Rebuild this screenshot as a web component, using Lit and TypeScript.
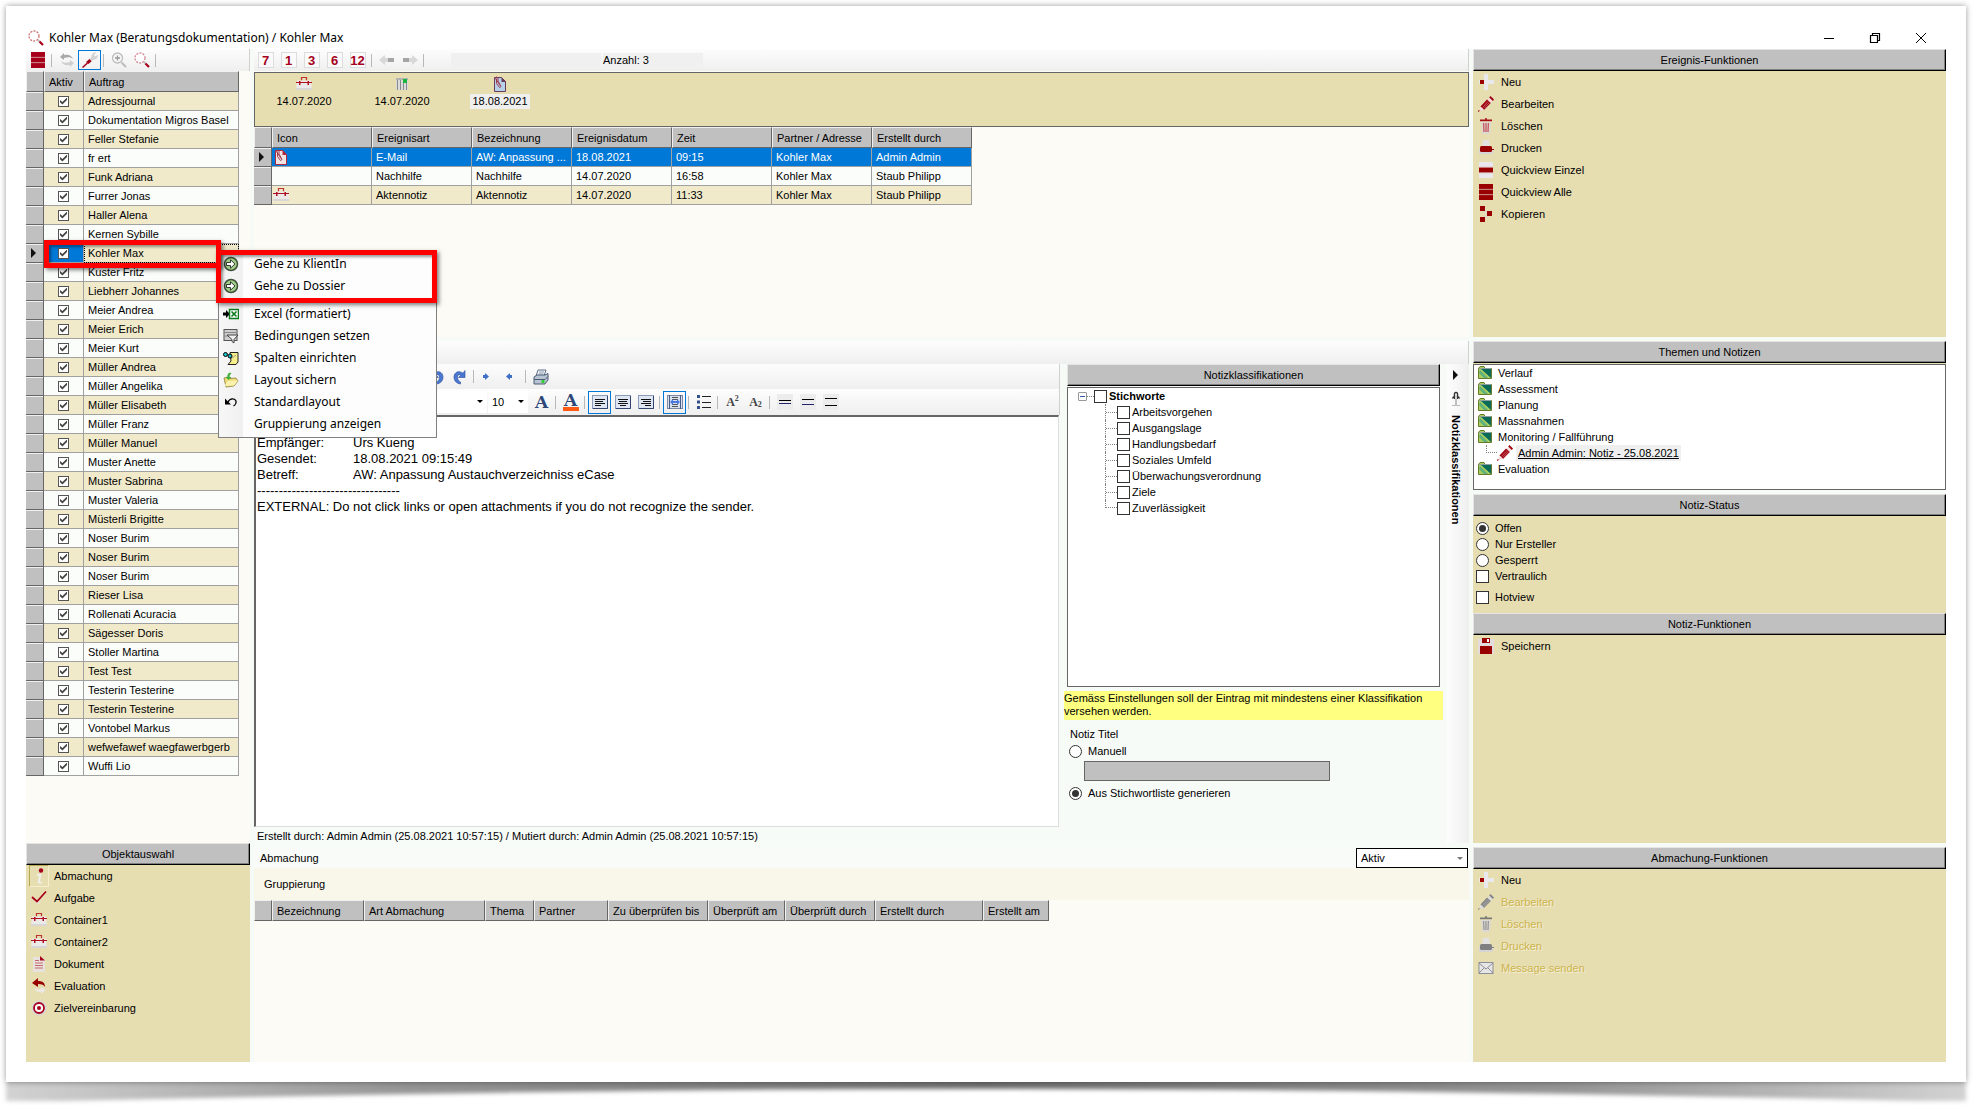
import { LitElement, html, svg, css, nothing } from "lit";
import { customElement, state } from "lit/decorators.js";
import { classMap } from "lit/directives/class-map.js";

const RED = "#a6001a";
const DARK_RED = "#990000";

const icon = (body: unknown, cls = "") =>
  html`<svg class="ic ${cls}" viewBox="0 0 16 16" width="16" height="16" aria-hidden="true">${body}</svg>`;

const pencil = (main: string, light: string) => svg`
  <path d="M9.500 4 12 1.500 15 4.500 12.500 7.500z" fill="${light}"/>
  <path d="M2.500 10.500 9 3.500 12.800 7 6 14z" fill="${main}"/>
  <path d="M11.200 1.500 12.500 0 16 3.500 14.800 5z" fill="${main}"/>
  <path d="M2.500 10.500 6 14 1.500 15z" fill="${light}"/>
  <path d="M0 14.500h2.500L0 16z" fill="${main}"/>
  <path d="M4.500 11.500 10 5.500M5.800 12.500 11.300 6.700" stroke="${light}" stroke-width=".4"/>`;

const trash = (main: string, light: string) => svg`
  <path d="M3 4h10l-1.300 12H4.300z" fill="#dcd8d4"/>
  <path d="M2 1.500h12v1.700H2z" fill="${main}"/><path d="M7 .2h2v1.600H7z" fill="${main}"/>
  <path d="M5.600 5 6 14M8 5v9M10.400 5 10 14" stroke="${light}" stroke-width="1.300"/>`;

const printer = (main: string) => svg`
  <path d="M5 0h6l1 6H4z" fill="#e4e2e0"/><path d="M1 8h14v5l-1 1H2l-1-1z" fill="#d6d4d4"/>
  <rect x="2" y="6" width="12" height="6" rx="1.500" fill="${main}"/>
  <path d="M13 9.500h3" stroke="${main}"/>`;

const briefcase = svg`
  <path d="M5.500 4.500v-3h5v3" fill="none" stroke="#b33" stroke-width="1.200"/>
  <path d="M1 4.500h14l1 9.500H0z" fill="#ece9e9"/><path d="M0 12h16v2H0z" fill="#d9d6d6"/>
  <path d="M0 6.500h16" stroke="#b01020" stroke-width="1"/>
  <path d="M3 5h1.500v4H3zM11.500 5H13v4h-1.500z" fill="#b01020"/>`;

const stack = (a: string, b: string) => svg`
  <rect x="1" y="0" width="14" height="16" fill="#e4e0dc"/>
  <rect x="1" y="0" width="14" height="5" fill="${a}"/>
  <rect x="1" y="5.500" width="14" height="5" fill="${b}"/>
  <rect x="1" y="11" width="14" height="5" fill="${a}"/>
  <path d="M1 5.300h14M1 10.700h14" stroke="#c98a8a" stroke-width=".7"/>`;

const lens = (ring: string, handle: string) => svg`
  <circle cx="6" cy="6" r="5" fill="#fff" stroke="${ring}" stroke-width="1.300" stroke-dasharray="2 1.200"/>
  <path d="M10 10l1.500 1.500" stroke="#bbb" stroke-width="2"/>
  <path d="M11.500 11.500l3.500 3.500" stroke="${handle}" stroke-width="2.200"/>`;

const clipDoc = (fill: string, line: string) => svg`
  <path d="M2.500 1.500h7l4 4v10h-11z" fill="${fill}" stroke="${line}"/>
  <path d="M9.500 1v5h4.500z" fill="${line}"/>
  <path d="M4.500 2.500v5l3 4 1.500-1L6 5V2L4.500.8 3.500 2.500l4.500 7" fill="none" stroke="#a03c50"/>`;

const align = (x1: number, x2: number, x3: number) => svg`
  <rect x=".5" y="1.500" width="15" height="13" fill="#dfe6f3" stroke="#8b9cba"/>
  <path d="M1 14.500h14.500V2" fill="none" stroke="#31456e"/>
  <path d="M3 5.500h10M${x1} 7.500h8M${x2} 9.500h10M${x3} 11.500h6" stroke="#111"/>`;

const spacing = (top: string, bottom: string, gap: number) => svg`
  <rect width="16" height="16" fill="#ececec"/>
  <path d="M2 ${8 - gap}h12" stroke="${top}"/><path d="M2 ${8 + gap}h12" stroke="${bottom}"/>`;

const go = svg`
  <circle cx="8" cy="8" r="6.500" fill="#9fce86" stroke="#3d4f3a" stroke-width="1.500"/>
  <path d="M3.500 6.500h4V3.800L12 8l-4.500 4.200V9.500h-4z" fill="#fff" stroke="#222" stroke-width=".9"/>`;

const curl = svg`
  <path d="M3 1.500v7h6.500L7.300 6.200C9 5 10.500 6 10.500 8c0 2.500-1 4-3 5v2C11.500 14.500 14 12 14 8c0-5-5-7-9-3.800z" fill="#4a78d0" stroke="#2c4f9c" stroke-width=".6"/>`;

const ICONS: Record<string, unknown> = {
  search: lens("#c77", RED),
  searchRed: lens("#d08a95", RED),
  zoomIn: svg`<circle cx="6.500" cy="6" r="5" fill="#f6f6f6" stroke="#bdbdbd" stroke-width="1.300"/>
    <path d="M4 6h5M6.500 3.500v5" stroke="#999" stroke-width="1.300"/><path d="M10.500 10.500l4.500 4.500" stroke="#bbb" stroke-width="2"/>`,
  db: stack(RED, RED),
  refresh: svg`<path d="M1 5l4-4v2c5-1 8 1 9 4-2-2-5-2-9-1v2z" fill="#a9a9a9"/>
    <path d="M15 11l-4 4v-2c-5 1-8-1-9-4 2 2 5 2 9 1V8z" fill="#cfcfcf"/>`,
  wrench: svg`<path d="M6 9l3.500-4C9 2 11.500 0 14.500.2L12 3l1 1.500 3-1.800c.3 3-2 5.300-4.800 5L8 11z" fill="#d5d2d2"/>
    <path d="M4 10 7.500 7l2 2.200L6.500 12z" fill="${RED}"/><path d="M.5 15.500l5-4.500" stroke="${RED}" stroke-width="1.500"/>`,
  left: svg`<path d="M0 8l6-5v3h4v4H6v3z" fill="#d8d8d8"/><rect x="9" y="6" width="6" height="4" fill="#a5a5a5"/>`,
  right: svg`<path d="M16 8l-6-5v3H6v4h4v3z" fill="#d8d8d8"/><rect x="1" y="6" width="6" height="4" fill="#a5a5a5"/>`,
  briefcase,
  calendar: svg`<rect x="2" y="2" width="12" height="12" fill="#fff"/><path d="M2 3h12" stroke="#666"/>
    <path d="M3.500 4v10M6.500 4v10M9.500 4v10M12.500 4v10" stroke="#8a8a8a" stroke-width="1.600"/><rect x="9" y="3" width="4" height="4" fill="#18b63a"/>`,
  clipBlue: clipDoc("#b5d0e8", "#6a3c5c"),
  clipRed: clipDoc("#f0e4e4", "#b02a3a"),
  plus: svg`<path d="M6 0h4v6h6v4h-6v6H6v-6H1V6h5z" fill="#e9e8ec"/><rect x="2" y="6" width="4" height="4" fill="${DARK_RED}"/>`,
  edit: pencil("#a00010", "#f4dede"),
  editOff: pencil("#858585", "#dcdcdc"),
  trash: trash("#a50c18", "#c8555a"),
  trashOff: trash("#777", "#999"),
  print: printer(DARK_RED),
  printOff: printer("#808080"),
  single: stack("#e9e8ec", DARK_RED),
  all: stack(DARK_RED, DARK_RED),
  copy: svg`<path d="M5 4l6 4-6 5" fill="none" stroke="#dcd8d0" stroke-width="2"/>
    <rect x="2" y="0" width="5" height="5" fill="${DARK_RED}"/><rect x="9" y="5" width="5" height="5" fill="${DARK_RED}"/><rect x="2" y="11" width="5" height="5" fill="${DARK_RED}"/>`,
  folder: svg`<path d="M1.500 13.500v-10l1.500-2h4l1 2h6.500v10z" fill="#a8cf60" stroke="#6b7a28"/>
    <path d="M4 4h10v9z" fill="#0b6a58"/><path d="M3 5l8 8H7L2 8z" fill="#5fb07a"/><path d="M1.500 3.500h13" stroke="#8aa0a0"/>`,
  save: svg`<path d="M0 1h16v15H0z" fill="#e4dcdc"/><rect x="4" y="0" width="8" height="5" fill="${DARK_RED}"/>
    <rect x="9" y="1" width="2" height="3" fill="#fff"/><rect x="2" y="8" width="12" height="8" fill="${DARK_RED}"/>`,
  info: svg`<circle cx="10" cy="2.500" r="2.200" fill="${RED}"/><path d="M6 6h4.500L9 14h2v1.500H6.500L8 8H6z" fill="#efeee8"/>`,
  check: svg`<path d="M3 10l4 4 4-3-4 1z" fill="#e8e8e8"/><path d="M1 7l5 4.500 9-10" fill="none" stroke="${RED}" stroke-width="1.700"/>`,
  doc: svg`<path d="M2 1h8l4 4v11H2z" fill="#e8e2df"/><path d="M9 0v4.500h5z" fill="${RED}"/>
    <path d="M4 4.500h4M4 7h8M4 9.500h8M4 12h8" stroke="#c8686c"/>`,
  evaluate: svg`<path d="M1 5l6-5v3c5 0 7 2 7 6-1-2-3-3-7-3v3z" fill="${DARK_RED}"/>
    <path d="M15 12l-5 4v-2c-4 0-6-1-7-4 2 1 4 1.500 7 1V9z" fill="#ebe8e4"/>`,
  target: svg`<circle cx="8" cy="8" r="7.500" fill="#d9d6d8"/><circle cx="8" cy="8" r="5" fill="#fff" stroke="${RED}" stroke-width="1.800"/><circle cx="8" cy="8" r="2" fill="${RED}"/>`,
  mail: svg`<rect x="1" y="2.500" width="14" height="11" fill="#e6e6e6" stroke="#8e8e96"/>
    <path d="M1 3l7 6 7-6M1 13l5-5M15 13l-5-5" fill="none" stroke="#8e8e96"/>`,
  go,
  excel: svg`<path d="M0 6.500h3V4l4 4-4 4V9.500H0z" fill="#000"/><rect x="6.500" y="3.500" width="9" height="9" fill="#fff" stroke="#0a7a1c" stroke-width="1.500"/>
    <path d="M8.500 5.500l5 5M13.500 5.500l-5 5" stroke="#0a7a1c" stroke-width="1.600"/>`,
  filter: svg`<rect x="1" y="1.500" width="13" height="11" fill="#cfcfcf" stroke="#555"/><path d="M1 4.500h13M1 8h13" stroke="#888"/>
    <path d="M4 7h11l-4 4.500V15l-2-1.500v-2z" fill="#f2f2f2" stroke="#444"/>`,
  columns: svg`<path d="M7 2.500h8V12l-2 2.500H5L8 11z" fill="#f7ef8c" stroke="#222"/>
    <circle cx="2.500" cy="4.500" r="2" fill="#19c2c9" stroke="#000"/><circle cx="7" cy="6" r="2" fill="#19c2c9" stroke="#000"/><path d="M8 9l5-4" stroke="#998" />`,
  layout: svg`<path d="M1 6l4-1 2 1.500 6-.5 2 3-4 5-8 1z" fill="#f0dc7a" stroke="#8a7d35" stroke-width=".8"/>
    <path d="M1.500 14l3-5 10.500-.5-4 5z" fill="#fbf2ae"/><path d="M7 .5C5 1 4 3 4.500 5H2.500l3 3 3-3H6.500c0-2 1-3 2-3.500z" fill="#3fae3a"/>`,
  revert: svg`<path d="M2 4.500v6h6z" fill="#000"/><path d="M5 8c2-4 7-4 8-1 .5 2-1 4-2.500 5" fill="none" stroke="#000" stroke-width="1.200"/>`,
  undo: curl,
  redo: svg`<g transform="matrix(-1 0 0 1 16 0)">${curl}</g>`,
  dotR: svg`<path d="M2 6h2V4l4 3.500L4 11V9H2z" fill="#3f6fc6"/>`,
  dotL: svg`<path d="M8 6H6V4L2 7.500 6 11V9h2z" fill="#3f6fc6"/>`,
  printBlue: svg`<path d="M5 1h8l-2 6H3z" fill="#f7f9fc" stroke="#5c6c84"/><path d="M6 3h5M5.500 5h5" stroke="#8696ae"/>
    <path d="M1 8l3-2h8l3-1.500V11l-3 4H1z" fill="#b9c4d2" stroke="#4c5c74"/><path d="M1 10.500h11l3-3" fill="none" stroke="#4c5c74"/><rect x="8.500" y="11" width="3" height="3" fill="#2fd32f"/>`,
  alignLeft: align(3, 3, 3),
  alignCenter: align(4, 3, 5),
  alignRight: align(5, 3, 7),
  justify: svg`<rect x=".5" y="1.500" width="15" height="13" fill="#d8e0ee" stroke="#7c8aa6"/><path d="M2.500 1v14M13.500 1v14" stroke="#4a5d88"/>
    <path d="M5 3.500h6M5 5.500h6M5 10.500h6M5 12.500h6" stroke="#555"/><path d="M3 8l3-3v2h4V5l3 3-3 3V9H6v2z" fill="#4a7ae0"/>`,
  bullets: svg`<path d="M1 1h3v3H1zM1 6.500h3v3H1zM1 12h3v3H1z" fill="#34508c"/><path d="M6 2.500h9M6 8.500h9M6 13.500h9" stroke="#222"/>`,
  space1: spacing("#000", "#23236c", 1.500),
  space2: spacing("#000", "#23236c", 2.500),
  space3: spacing("#000", "#000", 3.500),
  min: svg`<path d="M3 8.500h10" stroke="#000"/>`,
  restore: svg`<path d="M3.500 5.500h7v7h-7z" fill="none" stroke="#000" stroke-width="1.200"/><path d="M5.500 5V3.500h7v7H11" fill="none" stroke="#000" stroke-width="1.200"/>`,
  close: svg`<path d="M3 3l10 10M13 3L3 13" stroke="#000"/>`,
  tri: svg`<path d="M5 3l5 5-5 5z" fill="#111"/>`,
  pin: svg`<path d="M6.500 8V4.500Q6 1.500 8 1.500T9.500 4.500V8M4.500 7.500q1-2 2-2M11.500 7.500q-1-2-2-2" fill="none" stroke="#333" stroke-width="1.400"/><path d="M8 8v6" stroke="#888"/><path d="M4 14.500h8" stroke="#bbb"/>`,
};

const ic = (name: string, cls = "") => icon(ICONS[name], cls);

const ORDERS = [
  "Adressjournal", "Dokumentation Migros Basel", "Feller Stefanie", "fr ert", "Funk Adriana", "Furrer Jonas",
  "Haller Alena", "Kernen Sybille", "Kohler Max", "Kuster Fritz", "Liebherr Johannes", "Meier Andrea",
  "Meier Erich", "Meier Kurt", "Müller Andrea", "Müller Angelika", "Müller Elisabeth", "Müller Franz",
  "Müller Manuel", "Muster Anette", "Muster Sabrina", "Muster Valeria", "Müsterli Brigitte", "Noser Burim",
  "Noser Burim", "Noser Burim", "Rieser Lisa", "Rollenati Acuracia", "Sägesser Doris", "Stoller Martina",
  "Test Test", "Testerin Testerine", "Testerin Testerine", "Vontobel Markus", "wefwefawef waegfawerbgerb", "Wuffi Lio",
];

type Item = { icon: string; label: string; off?: boolean; boxed?: boolean };

const EVENT_ACTIONS: Item[] = [
  { icon: "plus", label: "Neu" },
  { icon: "edit", label: "Bearbeiten" },
  { icon: "trash", label: "Löschen" },
  { icon: "print", label: "Drucken" },
  { icon: "single", label: "Quickview Einzel" },
  { icon: "all", label: "Quickview Alle" },
  { icon: "copy", label: "Kopieren" },
];
const AGREEMENT_ACTIONS: Item[] = [
  { icon: "plus", label: "Neu" },
  { icon: "editOff", label: "Bearbeiten", off: true },
  { icon: "trashOff", label: "Löschen", off: true },
  { icon: "printOff", label: "Drucken", off: true },
  { icon: "mail", label: "Message senden", off: true },
];
const OBJECTS: Item[] = [
  { icon: "info", label: "Abmachung", boxed: true },
  { icon: "check", label: "Aufgabe" },
  { icon: "briefcase", label: "Container1" },
  { icon: "briefcase", label: "Container2" },
  { icon: "doc", label: "Dokument" },
  { icon: "evaluate", label: "Evaluation" },
  { icon: "target", label: "Zielvereinbarung" },
];
const MENU: Item[] = [
  { icon: "excel", label: "Excel (formatiert)" },
  { icon: "filter", label: "Bedingungen setzen" },
  { icon: "columns", label: "Spalten einrichten" },
  { icon: "layout", label: "Layout sichern" },
  { icon: "revert", label: "Standardlayout" },
  { icon: "", label: "Gruppierung anzeigen" },
];
const EVENT_HEAD = ["Icon", "Ereignisart", "Bezeichnung", "Ereignisdatum", "Zeit", "Partner / Adresse", "Erstellt durch"];
const EVENTS = [
  ["clipRed", "E-Mail", "AW: Anpassung ...", "18.08.2021", "09:15", "Kohler Max", "Admin Admin"],
  ["", "Nachhilfe", "Nachhilfe", "14.07.2020", "16:58", "Kohler Max", "Staub Philipp"],
  ["briefcase", "Aktennotiz", "Aktennotiz", "14.07.2020", "11:33", "Kohler Max", "Staub Philipp"],
];
const AGREEMENT_HEAD: [string, number][] = [
  ["Bezeichnung", 92], ["Art Abmachung", 121], ["Thema", 49], ["Partner", 74], ["Zu überprüfen bis", 100],
  ["Überprüft am", 77], ["Überprüft durch", 90], ["Erstellt durch", 108], ["Erstellt am", 66],
];
const KEYWORDS = ["Arbeitsvorgehen", "Ausgangslage", "Handlungsbedarf", "Soziales Umfeld", "Überwachungsverordnung", "Ziele", "Zuverlässigkeit"];
const DATES = [["briefcase", "14.07.2020"], ["calendar", "14.07.2020"], ["clipBlue", "18.08.2021"]];

@customElement("app-root")
export class AppRoot extends LitElement {
  @state() private order = 8;
  @state() private event = 0;

  static styles = css`
    :host { display: block; font: 11px/14px "Liberation Sans", Arial, sans-serif; color: #000; background: #fff; }
    *, *::before, *::after { box-sizing: border-box; }
    button, input, select { font: inherit; color: inherit; margin: 0; padding: 0; border: 0; background: none; border-radius: 0; }
    h1, h2, ul, p { margin: 0; padding: 0; font: inherit; list-style: none; }
    .ic { display: block; flex: none; }
    .page { display: flex; flex-direction: column; min-height: 100vh; padding: 6px 14px 0 6px; }
    .card { position: relative; flex: 1; display: flex; flex-direction: column; padding: 20px; background: #fff; box-shadow: 0 0 6px rgba(0, 0, 0, .4); }
    .curl { display: block; width: 100%; height: 29px; overflow: visible; }

    .title { display: flex; align-items: center; height: 23px; padding-left: 2px; gap: 5px; font: 12px/16px "Noto Sans", "Open Sans", sans-serif; }
    .title h1 { flex: 1; }
    .title button { width: 46px; height: 20px; display: grid; place-items: center; }
    .win { display: flex; padding-right: 2px; }

    .app { flex: 1; display: grid; grid-template-columns: 224px minmax(0, 1fr) 473px; gap: 4px; background: #f7fbf8; }
    .left, .block, .stack { display: flex; flex-direction: column; min-width: 0; }
    .left { background: #fcfbf6; }
    .mid, .right { display: grid; gap: 4px; min-width: 0; }
    .mid { grid-template-rows: 288fr 502fr 215fr; }
    .right { grid-template-rows: 288fr 149px 349fr 215fr; }
    .grow { flex: 1; }

    .bar { display: flex; align-items: center; flex: none; background: linear-gradient(#fdfdfd, #efefef); border-right: 1px solid #d0d0d0; }
    .bar.main { height: 22px; }
    .bar.mb { margin-bottom: 1px; }
    .tool { flex: none; width: 23px; height: 20px; display: grid; place-items: center; }
    .tool.on { border: 1px solid #0078d7; }
    .tool.tall { height: 23px; }
    .sep { flex: none; width: 6px; height: 13px; border-left: 1px solid #b8b8b8; margin-left: 2px; margin-right: -2px; }
    .num { width: 16px; height: 16px; border: 1px solid #dcdcdc; background: #fafafa; color: #a6001a; font-weight: bold; font-size: 13px; line-height: 15px; display: flex; justify-content: center; }
    .count { display: flex; gap: 2px; margin-left: 24px; }
    .count span { background: #f0f0f0; height: 14px; }
    .count .blank { width: 150px; }
    .count .text { width: 100px; }

    table { table-layout: fixed; border-spacing: 0; border-collapse: separate; width: 0; flex: none; }
    th { height: 21px; padding: 0 0 0 4px; font-weight: normal; text-align: left; background: #c0c0c0; white-space: nowrap;
      border: 1px solid #666; border-top-color: #f0f0f0; border-left-color: #f0f0f0; }
    td { height: 19px; padding: 0 0 0 4px; border: solid #a0a0a0; border-width: 0 1px 1px 0; background: #fbfdfa; white-space: nowrap; overflow: hidden; }
    tr.odd td { background: #f0eacb; }
    td.sel, tr.odd td.sel { background: #c0c0c0; border-color: #666; padding: 0; box-shadow: inset 0 1px #f0f0f0; }
    td.tick { padding: 0; }
    td.tick input { margin: 0 auto; }
    td.blue, tr.odd td.blue, tr.current td, tr.odd.current td { background: #0078d7; }
    tr.current td { color: #fff; }
    tr.odd.current td.sel, tr.current td.sel { background: #c0c0c0; }
    td.focus { outline: 1px dotted #000; outline-offset: -1px; }
    td.pic { padding: 0 0 0 1px; }
    .c18 { width: 18px; } .c40 { width: 40px; } .c100 { width: 100px; } .c155 { width: 155px; }

    input[type="checkbox"] { appearance: none; flex: none; width: 13px; height: 13px; border: 1px solid #333; background: #fff; display: grid; place-items: center; }
    td input[type="checkbox"] { width: 11px; height: 11px; border-color: #555; }
    input[type="checkbox"]:checked::before { content: ""; width: 7px; height: 7px; background: #444; clip-path: polygon(0 35%, 35% 65%, 100% 0, 100% 35%, 35% 100%, 0 68%); }
    input[type="radio"] { appearance: none; flex: none; width: 13px; height: 13px; border: 1px solid #333; border-radius: 50%; background: #fff; display: grid; place-items: center; }
    input[type="radio"]:checked::before { content: ""; width: 7px; height: 7px; border-radius: 50%; background: #333; }

    .head { flex: none; height: 22px; display: grid; place-items: center; background: #c0c0c0; border: 1px solid #000;
      border-top-color: #e4e4e4; border-left-color: #e4e4e4; box-shadow: inset -1px -1px #808080; }
    .tan { background: #e6ddb0; }
    .actions button { display: flex; align-items: center; gap: 7px; height: 22px; padding-left: 5px; white-space: nowrap; }
    .actions button:disabled { color: #cdb44c; text-shadow: 1px 1px #f5f0d8; }
    .actions.objects button { padding-left: 3px; gap: 5px; }
    .slot { width: 20px; height: 22px; display: grid; place-items: center; }
    .slot.boxed { border: 1px solid #f6f0d0; border-left-color: #b8a850; border-top-color: #b8a850; }
    .objects-panel { height: 219px; }

    .events { background: #fcfbf6; }
    .dates { height: 55px; display: flex; border: 1px solid #666; background: #e6ddb0; }
    .dates button { width: 98px; display: flex; flex-direction: column; align-items: center; gap: 2px; padding-top: 3px; }
    .dates button span { padding: 0 2px; line-height: 15px; }
    .dates .cur { background: #efefef; }

    .strip { height: 23px; }
    .editor-row { flex: 1; display: flex; min-height: 0; }
    .editor { flex: 1; display: flex; flex-direction: column; min-width: 0; }
    .ebar { height: 25px; }
    .ebar.first { padding-left: 171px; }
    .ebar.second { height: 26px; padding-left: 14px; }
    .drop { position: relative; display: flex; height: 22px; background: #fff; }
    .drop select, .state select { appearance: none; width: 100%; height: 100%; padding-left: 4px; outline: 0; }
    .drop::after, .state::after { content: ""; position: absolute; right: 4px; top: 9px; border: 3px solid transparent; border-top-color: #000; border-bottom: 0; }
    .family { width: 219px; }
    .size { width: 40px; margin: 0 2px 0 1px; }
    .glyph { font: bold 17px/15px "DejaVu Serif", serif; color: #2c4778; }
    .glyph.color { border-bottom: 4px solid #ff5a14; width: 16px; line-height: 13px; text-align: center; }
    .script { font: bold 12px/14px "Liberation Serif", serif; color: #444; display: flex; }
    .script small { font-size: 8px; line-height: 8px; }
    .script .low { align-self: flex-end; }
    .letter { flex: 1; border: 2px solid #666; border-width: 2px 1px 1px 2px; border-right-color: #ddd; border-bottom-color: #ddd; background: #fff;
      padding: 18px 1px 0; font-size: 13px; line-height: 16px; margin-right: 1px; }
    .letter dl { display: grid; grid-template-columns: 96px 1fr; margin: 0; }
    .letter dd { margin: 0; }
    .stamp { height: 16px; line-height: 18px; padding-left: 3px; }

    .classes { width: 379px; display: flex; flex-direction: column; margin: 0 4px; }
    .classes .head { margin: 0 3px 0 3px; }
    .tree { flex: 1; margin: 1px 3px 4px; border: 1px solid #666; background: #fff; padding-left: 10px; }
    .root { display: flex; align-items: center; height: 16px; font-weight: bold; }
    .root label, .tree li label { display: flex; align-items: center; gap: 2px; height: 16px; }
    .toggle { width: 9px; height: 9px; border: 1px solid #999; display: grid; place-items: center; border-radius: 1px; }
    .toggle::before { content: ""; width: 5px; height: 1px; background: #3355aa; }
    .dash { flex: none; width: 7px; border-top: 1px dotted #808080; }
    .tree ul { margin-left: 27px; }
    .tree li { height: 16px; display: flex; align-items: center; border-left: 1px dotted #808080; }
    .tree li .dash { width: 11px; }
    .tree li:last-child { height: 8px; align-items: flex-start; }
    .tree li:last-child .dash { align-self: flex-end; }
    .warn { height: 29px; background: #ffff80; line-height: 13px; padding-top: 1px; }
    .naming { padding: 7px 5px 0; height: 123px; display: flex; flex-direction: column; align-items: flex-start; gap: 3px; }
    .naming p { padding-left: 1px; }
    .naming label { display: flex; align-items: center; gap: 6px; height: 14px; }
    .naming input[type="text"] { width: 246px; height: 20px; border: 1px solid #666; background: #c0c0c0; margin: 0 0 2px 15px; }
    .side { width: 22px; display: flex; flex-direction: column; align-items: center; gap: 8px; padding: 3px 5px 0 0; background: linear-gradient(90deg, #fdfdfd, #efefef); }
    .side button { writing-mode: vertical-rl; font-weight: bold; line-height: 14px; }

    .agree { background: #fcfbf6; }
    .agree-top { display: flex; align-items: center; justify-content: space-between; height: 21px; padding: 0 1px 0 6px; background: #f9fbf8; }
    .state { position: relative; width: 112px; height: 20px; border: 1px solid #000; background: #fff; }
    .state::after { top: 8px; border-top-color: #777; }
    .group { height: 32px; padding-left: 10px; display: flex; align-items: center; background: #f9f6ea; }

    .topics { flex: 1; border: 1px solid #666; margin-top: 1px; background: #fff; }
    .topics li { display: flex; align-items: center; height: 16px; padding-left: 3px; gap: 5px; }
    .topics li.child { padding-left: 12px; gap: 0; }
    .elbow { width: 11px; height: 8px; border: dotted #808080; border-width: 0 0 1px 1px; align-self: flex-start; }
    .topics a { color: inherit; background: #efefef; padding: 0 2px; margin-left: 3px; line-height: 16px; }
    .status { height: 97px; padding: 4px 3px 0; flex: none; }
    .status label { display: flex; align-items: center; gap: 6px; height: 16px; }
    .status .last { margin-top: 5px; }

    .menu { position: absolute; left: 212px; top: 244px; width: 219px; padding: 2px 0; border: 1px solid #808080; background: linear-gradient(90deg, #f7f7f7, #f0f0f0 24px, #fdfdfd 24px);
      font: 12px/16px "Noto Sans", "Open Sans", sans-serif; }
    .menu button { display: flex; align-items: center; gap: 15px; width: 100%; height: 22px; padding-left: 4px; white-space: nowrap; }
    .menu .jumps { margin-bottom: 6px; }
    .blankicon { width: 16px; }
    .mark { position: absolute; border: 5px solid #f00; box-shadow: 2px 2px 4px rgba(0, 0, 0, .5), inset 2px 2px 3px rgba(0, 0, 0, .4); pointer-events: none; }
    .mark.row { left: 38px; top: 234px; width: 177px; height: 28px; }
    .mark.pair { left: 210px; top: 244px; width: 221px; height: 53px; }
  `;

  private actions(items: Item[]) {
    return html`<ul class="actions">
      ${items.map((i) => html`<li><button ?disabled=${i.off}>${ic(i.icon)}${i.label}</button></li>`)}
    </ul>`;
  }

  private tool(name: string, label: string, cls = "") {
    return html`<button class="tool ${cls}" aria-label=${label}>${ic(name)}</button>`;
  }

  private renderLeft() {
    return html`<section class="left">
      <div class="bar main">
        ${this.tool("db", "Liste")}
        <i class="sep"></i>
        ${this.tool("refresh", "Aktualisieren")}${this.tool("wrench", "Einstellungen", "on")}
        <i class="sep"></i>
        ${this.tool("zoomIn", "Vergrössern")}${this.tool("searchRed", "Suchen")}
        <i class="sep"></i>
      </div>
      <table>
        <colgroup><col class="c18" /><col class="c40" /><col class="c155" /></colgroup>
        <thead><tr><th></th><th>Aktiv</th><th>Auftrag</th></tr></thead>
        <tbody>
          ${ORDERS.map((name, i) => {
            const cur = i === this.order;
            return html`<tr class=${classMap({ odd: i % 2 === 0 })} @click=${() => (this.order = i)}>
              <td class="sel">${cur ? ic("tri") : nothing}</td>
              <td class=${classMap({ tick: true, blue: cur })}><input type="checkbox" checked aria-label="${name} aktiv" /></td>
              <td class=${classMap({ focus: cur })}>${name}</td>
            </tr>`;
          })}
        </tbody>
      </table>
      <div class="grow"></div>
      <div class="objects-panel tan">
        <h2 class="head">Objektauswahl</h2>
        <ul class="actions objects">
          ${OBJECTS.map((o) => html`<li><button><span class=${classMap({ slot: true, boxed: !!o.boxed })}>${ic(o.icon)}</span>${o.label}</button></li>`)}
        </ul>
      </div>
    </section>`;
  }

  private renderEvents() {
    return html`<section class="block events">
      <div class="bar main mb">
        ${["7", "1", "3", "6", "12"].map((n) => html`<button class="tool"><span class="num">${n}</span></button>`)}
        <i class="sep"></i>
        ${this.tool("left", "Zurück")}${this.tool("right", "Vor")}
        <i class="sep"></i>
        <div class="count"><span class="blank"></span><span class="text">Anzahl: 3</span></div>
      </div>
      <div class="dates">
        ${DATES.map(([i, d], n) => html`<button>${ic(i)}<span class=${n === 2 ? "cur" : ""}>${d}</span></button>`)}
      </div>
      <table>
        <colgroup><col class="c18" />${EVENT_HEAD.map(() => html`<col class="c100" />`)}</colgroup>
        <thead><tr><th></th>${EVENT_HEAD.map((h) => html`<th>${h}</th>`)}</tr></thead>
        <tbody>
          ${EVENTS.map((row, i) => html`<tr class=${classMap({ odd: i % 2 === 0, current: i === this.event })} @click=${() => (this.event = i)}>
            <td class="sel">${i === this.event ? ic("tri") : nothing}</td>
            ${row.map((c, n) => (n === 0 ? html`<td class="pic">${c ? ic(c) : nothing}</td>` : html`<td>${c}</td>`))}
          </tr>`)}
        </tbody>
      </table>
    </section>`;
  }

  private renderEditor() {
    return html`<section class="block">
      <div class="bar strip"></div>
      <div class="editor-row">
        <div class="editor">
          <div class="bar ebar first">
            ${this.tool("undo", "Rückgängig")}${this.tool("redo", "Wiederholen")}
            <i class="sep"></i>
            ${this.tool("dotR", "Einzug vergrössern")}${this.tool("dotL", "Einzug verkleinern")}
            <i class="sep"></i>
            ${this.tool("printBlue", "Drucken")}
          </div>
          <div class="bar ebar second">
            <span class="drop family"><select aria-label="Schriftart"><option></option></select></span>
            <span class="drop size"><select aria-label="Schriftgrösse"><option>10</option></select></span>
            <button class="tool"><span class="glyph">A</span></button>
            <i class="sep"></i>
            <button class="tool"><span class="glyph color">A</span></button>
            <i class="sep"></i>
            ${this.tool("alignLeft", "Links", "on tall")}${this.tool("alignCenter", "Zentriert")}${this.tool("alignRight", "Rechts")}
            <i class="sep"></i>
            ${this.tool("justify", "Breite", "on tall")}
            <i class="sep"></i>
            ${this.tool("bullets", "Aufzählung")}
            <i class="sep"></i>
            <button class="tool"><span class="script">A<small>2</small></span></button>
            <button class="tool"><span class="script">A<small class="low">2</small></span></button>
            <i class="sep"></i>
            ${this.tool("space1", "Abstand 1")}${this.tool("space2", "Abstand 1.5")}${this.tool("space3", "Abstand 2")}
          </div>
          <div class="letter">
            <dl>
              <dt>Empfänger:</dt><dd>Urs Kueng</dd>
              <dt>Gesendet:</dt><dd>18.08.2021 09:15:49</dd>
              <dt>Betreff:</dt><dd>AW: Anpassung Austauchverzeichniss eCase</dd>
            </dl>
            <p>---------------------------------</p>
            <p>EXTERNAL: Do not click links or open attachments if you do not recognize the sender.</p>
          </div>
          <div class="stamp">Erstellt durch: Admin Admin (25.08.2021 10:57:15) / Mutiert durch: Admin Admin (25.08.2021 10:57:15)</div>
        </div>
        <div class="classes">
          <h2 class="head">Notizklassifikationen</h2>
          <div class="tree">
            <div class="root"><span class="toggle"></span><span class="dash"></span><label><input type="checkbox" />Stichworte</label></div>
            <ul>${KEYWORDS.map((k) => html`<li><span class="dash"></span><label><input type="checkbox" />${k}</label></li>`)}</ul>
          </div>
          <p class="warn">Gemäss Einstellungen soll der Eintrag mit mindestens einer Klassifikation versehen werden.</p>
          <div class="naming">
            <p>Notiz Titel</p>
            <label><input type="radio" name="naming" />Manuell</label>
            <input type="text" aria-label="Notiz Titel" disabled />
            <label><input type="radio" name="naming" checked />Aus Stichwortliste generieren</label>
          </div>
        </div>
        <div class="side">${ic("tri")}${ic("pin")}<button>Notizklassifikationen</button></div>
      </div>
    </section>`;
  }

  private renderAgreements() {
    return html`<section class="block agree">
      <div class="agree-top"><span>Abmachung</span><span class="state"><select aria-label="Status"><option>Aktiv</option></select></span></div>
      <div class="group">Gruppierung</div>
      <table>
        <colgroup><col class="c18" />${AGREEMENT_HEAD.map(([, w]) => html`<col style="width:${w}px" />`)}</colgroup>
        <thead><tr><th></th>${AGREEMENT_HEAD.map(([h]) => html`<th>${h}</th>`)}</tr></thead>
      </table>
    </section>`;
  }

  private renderRight() {
    const topic = (t: string) => html`<li>${ic("folder")}${t}</li>`;
    return html`<aside class="right">
      <section class="tan"><h2 class="head">Ereignis-Funktionen</h2>${this.actions(EVENT_ACTIONS)}</section>
      <section class="stack tan">
        <h2 class="head">Themen und Notizen</h2>
        <ul class="topics">
          ${["Verlauf", "Assessment", "Planung", "Massnahmen", "Monitoring / Fallführung"].map(topic)}
          <li class="child"><span class="elbow"></span>${ic("edit")}<a href="#notiz">Admin Admin: Notiz - 25.08.2021</a></li>
          ${topic("Evaluation")}
        </ul>
      </section>
      <section class="stack tan">
        <h2 class="head">Notiz-Status</h2>
        <div class="status">
          <label><input type="radio" name="status" checked />Offen</label>
          <label><input type="radio" name="status" />Nur Ersteller</label>
          <label><input type="radio" name="status" />Gesperrt</label>
          <label><input type="checkbox" />Vertraulich</label>
          <label class="last"><input type="checkbox" />Hotview</label>
        </div>
        <h2 class="head">Notiz-Funktionen</h2>
        ${this.actions([{ icon: "save", label: "Speichern" }])}
      </section>
      <section class="tan"><h2 class="head">Abmachung-Funktionen</h2>${this.actions(AGREEMENT_ACTIONS)}</section>
    </aside>`;
  }

  render() {
    return html`<div class="page">
      <main class="card">
        <header class="title">
          ${ic("search")}
          <h1>Kohler Max (Beratungsdokumentation) / Kohler Max</h1>
          <div class="win">
            <button aria-label="Minimieren">${ic("min")}</button>
            <button aria-label="Wiederherstellen">${ic("restore")}</button>
            <button aria-label="Schliessen">${ic("close")}</button>
          </div>
        </header>
        <div class="app">
          ${this.renderLeft()}
          <div class="mid">${this.renderEvents()}${this.renderEditor()}${this.renderAgreements()}</div>
          ${this.renderRight()}
        </div>
        <div class="menu" role="menu">
          <div class="jumps">
            ${["Gehe zu KlientIn", "Gehe zu Dossier"].map((l) => html`<button role="menuitem">${ic("go")}${l}</button>`)}
          </div>
          ${MENU.map((m) => html`<button role="menuitem">${m.icon ? ic(m.icon) : html`<span class="blankicon"></span>`}${m.label}</button>`)}
        </div>
        <div class="mark row"></div>
        <div class="mark pair"></div>
      </main>
      <svg class="curl" viewBox="0 0 1960 29" preserveAspectRatio="none" aria-hidden="true">
        <defs>
          <linearGradient id="g"><stop offset="0" stop-color="#d2d2d2" /><stop offset=".2" stop-color="#969696" /><stop offset=".5" stop-color="#707070" /><stop offset=".8" stop-color="#969696" /><stop offset="1" stop-color="#d2d2d2" /></linearGradient>
          <filter id="b" x="-1%" y="-50%" width="102%" height="200%"><feGaussianBlur stdDeviation="2" /></filter>
          <clipPath id="c"><rect x="-6" y="0" width="1980" height="29" /></clipPath>
        </defs>
        <g clip-path="url(#c)"><path d="M0-6H1960V19H1910Q1400 7 980 7T60 19H0z" fill="url(#g)" filter="url(#b)" /></g>
      </svg>
    </div>`;
  }
}
